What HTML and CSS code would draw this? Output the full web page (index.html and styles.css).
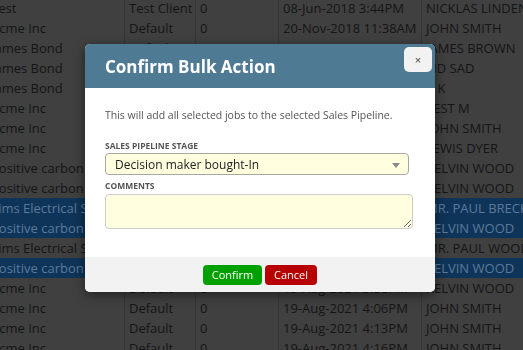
FILE: index.html
```html
<!DOCTYPE html>
<html lang="en">
<head>
    <meta charset="UTF-8">
    <title>Confirm Bulk Action</title>
    <link rel="stylesheet" href="styles.css">
</head>
<body>
    <div class="grid-wrap">
        <table class="jobs">
            <tr><td>Test</td><td>Test Client</td><td>0</td><td>08-Jun-2018 3:44PM</td><td>NICKLAS LINDEN</td></tr>
            <tr><td>Acme Inc</td><td>Default</td><td>0</td><td>20-Nov-2018 11:38AM</td><td>JOHN SMITH</td></tr>
            <tr><td>James Bond</td><td>Default</td><td>0</td><td>21-Nov-2018 9:12AM</td><td>JAMES BROWN</td></tr>
            <tr><td>James Bond</td><td>Default</td><td>0</td><td>21-Nov-2018 9:30AM</td><td>SID SAD</td></tr>
            <tr><td>James Bond</td><td>Default</td><td>0</td><td>22-Nov-2018 2:05PM</td><td>A K</td></tr>
            <tr><td>Acme Inc</td><td>Default</td><td>0</td><td>03-Dec-2018 10:21AM</td><td>TEST M</td></tr>
            <tr><td>Acme Inc</td><td>Default</td><td>0</td><td>14-Jan-2019 1:47PM</td><td>JOHN SMITH</td></tr>
            <tr><td>Acme Inc</td><td>Default</td><td>0</td><td>02-Apr-2019 8:55AM</td><td>LEWIS DYER</td></tr>
            <tr><td>Positive carbon</td><td>Default</td><td>0</td><td>11-Jun-2020 3:10PM</td><td>KELVIN WOOD</td></tr>
            <tr><td>Positive carbon</td><td>Default</td><td>0</td><td>11-Jun-2020 3:12PM</td><td>KELVIN WOOD</td></tr>
            <tr class="selected"><td>Sims Electrical Services</td><td>Default</td><td>0</td><td>15-Sep-2020 9:40AM</td><td>MR. PAUL BRECK</td></tr>
            <tr class="selected"><td>Positive carbon</td><td>Default</td><td>0</td><td>20-Oct-2020 4:02PM</td><td>KELVIN WOOD</td></tr>
            <tr><td>Sims Electrical Services</td><td>Default</td><td>0</td><td>05-Jan-2021 11:15AM</td><td>MR. PAUL WOOD</td></tr>
            <tr class="selected"><td>Positive carbon</td><td>Default</td><td>0</td><td>18-Mar-2021 2:30PM</td><td>KELVIN WOOD</td></tr>
            <tr><td>Acme Inc</td><td>Default</td><td>0</td><td>19-Aug-2021 3:58PM</td><td>KELVIN WOOD</td></tr>
            <tr><td>Acme Inc</td><td>Default</td><td>0</td><td>19-Aug-2021 4:06PM</td><td>JOHN SMITH</td></tr>
            <tr><td>Acme Inc</td><td>Default</td><td>0</td><td>19-Aug-2021 4:13PM</td><td>JOHN SMITH</td></tr>
            <tr><td>Acme Inc</td><td>Default</td><td>0</td><td>19-Aug-2021 4:16PM</td><td>JOHN SMITH</td></tr>
        </table>
    </div>

    <div class="overlay"></div>

    <div class="modal">
        <div class="modal-header">
            <h2>Confirm Bulk Action</h2>
            <button class="close-btn">&times;</button>
        </div>
        <div class="modal-body">
            <p class="intro">This will add all selected jobs to the selected Sales Pipeline.</p>
            <label class="field-label">Sales Pipeline Stage</label>
            <div class="select-box">
                <span>Decision maker bought-In</span>
                <span class="caret"></span>
            </div>
            <label class="field-label">Comments</label>
            <textarea class="comments"></textarea>
        </div>
        <div class="modal-footer">
            <button class="btn btn-confirm">Confirm</button>
            <button class="btn btn-cancel">Cancel</button>
        </div>
    </div>
</body>
</html>
```

FILE: styles.css
```css
body {
    margin: 0;
    background: #404040;
    font-family: "Open Sans", "Noto Sans", sans-serif;
    overflow: hidden;
    height: 350px;
}
.grid-wrap {
    margin-left: -9px;
    margin-top: -2px;
}
.jobs {
    border-collapse: collapse;
    font-size: 13px;
    color: #151515;
    background: #404040;
    white-space: nowrap;
}
.jobs td {
    height: 20px;
    padding: 0 0 0 4px;
    border-right: 1px solid #353535;
    overflow: hidden;
    max-width: 0;
    line-height: 20px;
}
.jobs td:nth-child(1) { width: 133px; min-width: 133px; max-width: 133px; padding-left: 0; }
.jobs td:nth-child(2) { width: 66px; min-width: 66px; max-width: 66px; }
.jobs td:nth-child(3) { width: 78px; min-width: 78px; max-width: 78px; }
.jobs td:nth-child(4) { width: 138px; min-width: 138px; max-width: 138px; }
.jobs td:nth-child(5) { width: 120px; min-width: 120px; max-width: 120px; }
.jobs tr.selected td {
    background: #0f3459;
    color: #5b7a99;
}
.overlay {
    position: fixed;
    inset: 0;
}
.modal {
    position: absolute;
    left: 85px;
    top: 44px;
    width: 350px;
    background: #fff;
    border-radius: 5px;
    overflow: hidden;
    box-shadow: 0 3px 12px rgba(0, 0, 0, 0.5);
}
.modal-header {
    background: #4e7a94;
    height: 44px;
    display: flex;
    align-items: center;
    justify-content: space-between;
    padding: 0 3px 0 20px;
}
.modal-header h2 {
    margin: 0;
    color: #fff;
    font-size: 17px;
    font-weight: bold;
    margin-top: 1px;
}
.close-btn {
    align-self: flex-start;
    margin-top: 3px;
    width: 28px;
    height: 25px;
    border: none;
    border-radius: 5px;
    background: #f2f2f2;
    color: #444;
    font-size: 11px;
    padding: 0;
    cursor: pointer;
}
.modal-body {
    padding: 20px 20px 28px 20px;
}
.intro {
    margin: 0 0 18px 0;
    font-size: 10.5px;
    line-height: 14px;
    color: #555;
}
.field-label {
    display: block;
    font-size: 8.5px;
    line-height: 12px;
    font-weight: bold;
    color: #555;
    text-transform: uppercase;
    margin-bottom: 1px;
}
.select-box {
    width: 304px;
    height: 22px;
    box-sizing: border-box;
    border: 1px solid #a8a8a0;
    border-radius: 4px;
    background: #ffffe0;
    display: flex;
    align-items: center;
    justify-content: space-between;
    padding: 0 8px 0 9px;
    font-size: 12px;
    color: #222;
    margin-bottom: 5px;
}
.caret {
    width: 0;
    height: 0;
    border-left: 4px solid transparent;
    border-right: 4px solid transparent;
    border-top: 5px solid #888;
    margin-top: 2px;
}
.comments {
    display: block;
    width: 308px;
    height: 35px;
    box-sizing: border-box;
    border: 1px solid #ccc;
    border-radius: 4px;
    background: #ffffe0;
    margin: 2px 0 0 0;
    resize: vertical;
}
.modal-footer {
    background: #f2f2f2;
    height: 35px;
    display: flex;
    justify-content: center;
    align-items: center;
    gap: 3px;
}
.btn {
    height: 20px;
    border: none;
    border-radius: 4px;
    color: #fff;
    font-family: "Open Sans", sans-serif;
    font-size: 11px;
    padding: 0 8px;
    cursor: pointer;
}
.btn-confirm {
    background: #00a000;
    width: 59px;
}
.btn-cancel {
    background: #b70000;
    width: 52px;
}
```
